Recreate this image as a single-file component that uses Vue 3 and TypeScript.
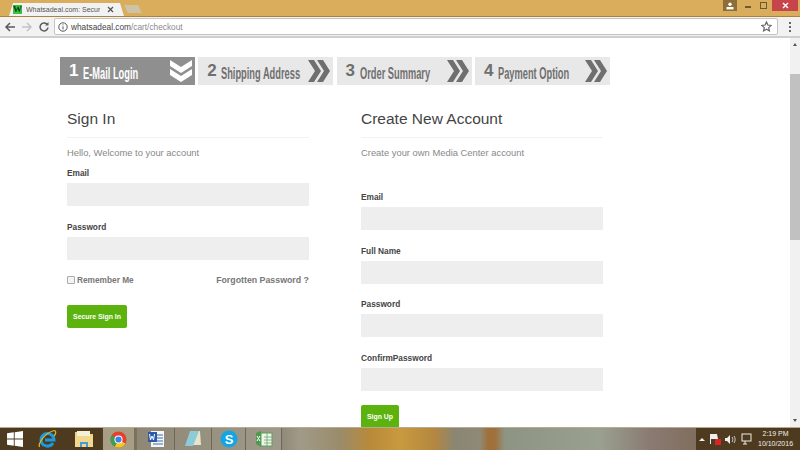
<script setup lang="ts">
const steps = [
  { n: 1, label: 'E-Mail Login', active: true },
  { n: 2, label: 'Shipping Address', active: false },
  { n: 3, label: 'Order Summary', active: false },
  { n: 4, label: 'Payment Option', active: false },
]
</script>

<template>
  <div class="screen">
    <header class="titlebar">
      <div class="tab">
        <span class="favicon">W</span>
        <span class="tabtitle">Whatsadeal.com: Secure</span>
        <svg class="tabclose" width="7" height="7" viewBox="0 0 7 7"><path d="M1 1l5 5M6 1l-5 5" stroke="#555" stroke-width="1.300" /></svg>
      </div>
      <div class="newtab"></div>
      <div class="winctl">
        <span class="user">
          <svg width="8" height="8" viewBox="0 0 8 8"><circle cx="4" cy="2.200" r="1.700" fill="#fff" /><rect x="0.500" y="5" width="7" height="2.400" fill="#fff" /></svg>
        </span>
        <span class="min"></span>
        <span class="restore"></span>
        <span class="close">
          <svg width="7" height="7" viewBox="0 0 7 7"><path d="M1 1l5 5M6 1l-5 5" stroke="#fff" stroke-width="1.400" /></svg>
        </span>
      </div>
    </header>

    <div class="toolbar">
      <svg class="nav" width="12" height="12" viewBox="0 0 12 12"><path d="M11 6H2M6 2L2 6l4 4" fill="none" stroke="#5a5a5a" stroke-width="1.500" /></svg>
      <svg class="nav" width="12" height="12" viewBox="0 0 12 12"><path d="M1 6h9M6 2l4 4-4 4" fill="none" stroke="#c4c4c4" stroke-width="1.500" /></svg>
      <svg class="nav" width="12" height="12" viewBox="0 0 12 12"><path d="M10 6.500A4 4 0 1 1 8.800 3" fill="none" stroke="#5a5a5a" stroke-width="1.500" /><path d="M10.500 1v3.600H7z" fill="#5a5a5a" /></svg>
      <div class="omnibox">
        <svg width="10" height="10" viewBox="0 0 10 10"><circle cx="5" cy="5" r="4.200" fill="none" stroke="#555" /><path d="M5 4.400v3M5 2.400v1" stroke="#555" /></svg>
        <span class="url"><span class="host">whatsadeal.com</span>/cart/checkout</span>
        <svg class="star" width="11" height="11" viewBox="0 0 12 12"><path d="M6 1l1.500 3.400 3.700.4-2.800 2.400.8 3.600L6 9l-3.200 1.800.8-3.600L.8 4.800l3.700-.4z" fill="none" stroke="#666" stroke-width="1.300" /></svg>
      </div>
      <span class="menu"><i></i><i></i><i></i></span>
    </div>

    <div class="viewport">
      <main class="page">
        <nav class="steps">
          <div v-for="s in steps" :key="s.n" class="step" :class="{ active: s.active }">
            <span class="num">{{ s.n }}</span>
            <span class="lab">{{ s.label }}</span>
            <svg v-if="s.active" class="chev" width="24" height="24" viewBox="0 0 24 24">
              <path d="M1 1l11 7 11-7v6l-11 7-11-7zM1 10l11 7 11-7v6l-11 7-11-7z" fill="#fff" />
            </svg>
            <svg v-else class="chev" width="24" height="22" viewBox="0 0 24 22">
              <path d="M1 0h6l7 11-7 11H1l7-11zM10 0h6l7 11-7 11h-6l7-11z" fill="#6f6f6f" />
            </svg>
          </div>
        </nav>

        <div class="cols">
          <section class="col">
            <h2>Sign In</h2>
            <p class="lead">Hello, Welcome to your account</p>
            <label class="fl first">Email</label>
            <div class="input"></div>
            <label class="fl">Password</label>
            <div class="input"></div>
            <div class="row">
              <span class="remember"><i class="check"></i>Remember Me</span>
              <span class="forgot">Forgotten Password ?</span>
            </div>
            <button class="btn signin">Secure Sign In</button>
          </section>

          <section class="col">
            <h2>Create New Account</h2>
            <p class="lead">Create your own Media Center account</p>
            <label class="fl first wide">Email</label>
            <div class="input"></div>
            <label class="fl">Full Name</label>
            <div class="input"></div>
            <label class="fl">Password</label>
            <div class="input"></div>
            <label class="fl">ConfirmPassword</label>
            <div class="input"></div>
            <button class="btn signup">Sign Up</button>
          </section>
        </div>
      </main>
      <aside class="scroll">
        <span class="up"></span>
        <span class="thumb"></span>
        <span class="down"></span>
      </aside>
    </div>

    <footer class="taskbar">
      <span class="tb w29">
        <svg width="16" height="16" viewBox="0 0 16 16"><path d="M0 2.300l6.800-1v6.300H0zM7.700 1.200L16 0v7.600H7.700zM0 8.500h6.800v6.300L0 13.800zM7.700 8.500H16V16l-8.300-1.200z" fill="#fff" /></svg>
      </span>
      <span class="tb w36">
        <svg width="20" height="20" viewBox="0 0 20 20"><path d="M4 11a6.500 6.500 0 0 1 13 0H8" fill="none" stroke="#1a9be0" stroke-width="3" /><path d="M16 14a6.500 6.500 0 0 1-12-3" fill="none" stroke="#1a9be0" stroke-width="3" /><path d="M2.500 18C1 15 7 4 17.500 1.500 19.500 2 19 5 17 7" fill="none" stroke="#e8b923" stroke-width="1.200" /></svg>
      </span>
      <span class="tb w38">
        <svg width="20" height="18" viewBox="0 0 20 18"><path d="M1 2h7l1 2h10v13H1z" fill="#ecd484" /><rect x="3" y="1" width="13" height="5" fill="#f4efd8" /><rect x="1" y="6" width="18" height="11" fill="#f0d98e" /><path d="M6 12h8v5h-2v-3H8v3H6z" fill="#4a9bd4" /></svg>
      </span>
      <span class="tb w31 on">
        <svg width="17" height="17" viewBox="0 0 18 18"><circle cx="9" cy="9" r="8.500" fill="#e3402f" /><path d="M9 9L16.400 13.200A8.500 8.500 0 0 1 5 16.500z" fill="#f7c71e" /><path d="M9 9L5 16.500A8.500 8.500 0 0 1 1.600 4.800z" fill="#36a14d" /><circle cx="9" cy="9" r="4.300" fill="#fff" /><circle cx="9" cy="9" r="3.300" fill="#3f80e8" /></svg>
      </span>
      <span class="sep"></span>
      <span class="tb w38 on2">
        <svg width="18" height="18" viewBox="0 0 18 18"><rect x="4" y="1" width="13" height="16" fill="#f4f6fa" /><path d="M9 5h7M9 8h7M9 11h7M6 14h10" stroke="#3b6fb5" /><rect x="1" y="2" width="9" height="10" fill="#2c5aa8" /><path d="M2.500 4l1 6 1.500-4 1.500 4 1-6" fill="none" stroke="#fff" /></svg>
      </span>
      <span class="tb w37 on2">
        <svg width="18" height="18" viewBox="0 0 18 18"><path d="M7 1h9l1 14H7z" fill="#e9e3cc" /><path d="M6 1h9L9 16H1z" fill="#8ccbd8" /></svg>
      </span>
      <span class="tb w34 on2">
        <svg width="18" height="18" viewBox="0 0 18 18"><circle cx="9" cy="9" r="8.500" fill="#12a5e6" /><text x="9" y="13.500" text-anchor="middle" font-size="13" font-weight="700" font-family="Liberation Sans" fill="#fff">S</text></svg>
      </span>
      <span class="tb w36 on2">
        <svg width="18" height="18" viewBox="0 0 18 18"><rect x="6" y="3" width="11" height="13" fill="#eef5ea" stroke="#5f9e5f" /><path d="M9 7h8M9 10h8M9 13h8M12 3v13" stroke="#6aa86a" stroke-width="0.800" /><path d="M6 1L1 3v11l5 3z" fill="#4f9a4f" /><path d="M2 6l3 5M5 6l-3 5" stroke="#fff" /></svg>
      </span>
      <span class="fill"></span>
      <div class="tray">
        <span class="caret"></span>
        <svg width="12" height="12" viewBox="0 0 12 12"><path d="M2 1h6l1 5H2z" fill="#eee" /><rect x="1" y="1" width="1" height="10" fill="#eee" /><rect x="6" y="6" width="6" height="6" fill="#d8232a" /></svg>
        <svg width="11" height="11" viewBox="0 0 11 11"><path d="M0 4h2l3-3v9L2 7H0z" fill="#eee" /><path d="M7 3c1 1.500 1 3.500 0 5M9 2c1.500 2 1.500 5 0 7" fill="none" stroke="#ccc" /></svg>
        <svg width="12" height="12" viewBox="0 0 12 12"><rect x="2" y="1" width="9" height="7" fill="none" stroke="#eee" /><path d="M5 8v3M3 11h4" stroke="#eee" /></svg>
        <span class="clock"><span>2:19 PM</span><span>10/10/2016</span></span>
      </div>
    </footer>
  </div>
</template>

<style>
html, body { margin: 0; overflow: hidden; }
</style>

<style scoped>
.screen {
  width: 800px;
  height: 450px;
  display: flex;
  flex-direction: column;
  overflow: hidden;
  font-family: "Liberation Sans", Arial, sans-serif;
  background: #fff;
}
.titlebar {
  height: 16px;
  background: #d9ad5c;
  display: flex;
  align-items: flex-end;
  flex: none;
}
.tab {
  width: 115px;
  height: 13px;
  margin-left: 9px;
  background: #f2f2f2;
  display: flex;
  align-items: center;
  padding-left: 4px;
  box-sizing: border-box;
  clip-path: polygon(0 100%, 4px 0, 111px 0, 100% 100%);
}
.favicon {
  width: 9px;
  height: 9px;
  background: #36c33d;
  color: #12361a;
  font: 700 9px/9px "Liberation Serif", serif;
  text-align: center;
  flex: none;
}
.tabtitle {
  font-size: 7px;
  line-height: 11px;
  color: #555;
  width: 74px;
  margin-left: 4px;
  white-space: nowrap;
  overflow: hidden;
  flex: none;
}
.tabclose { margin-left: 7px; flex: none; }
.newtab {
  width: 14px;
  height: 8px;
  background: #cfc3a6;
  margin: 0 0 3px 2px;
  transform: skewX(25deg);
}
.winctl {
  margin-left: auto;
  align-self: flex-start;
  display: flex;
  align-items: flex-start;
}
.user {
  width: 14px;
  height: 11px;
  margin-right: 8px;
  background: #8d6e38;
  display: flex;
  align-items: center;
  justify-content: center;
}
.min { width: 6px; height: 2px; background: #6b5a36; margin: 6px 9px 0 0; }
.restore { width: 5px; height: 5px; border: 1px solid #6b5a36; margin: 2px 5px 0 0; }
.close {
  width: 26px;
  height: 11px;
  margin-right: 2px;
  background: #c8444b;
  display: flex;
  align-items: center;
  justify-content: center;
}
.toolbar {
  height: 22px;
  flex: none;
  box-sizing: border-box;
  background: #f2f2f2;
  border-top: 1px solid #a8833f;
  border-bottom: 2px solid #cfcfcf;
  display: flex;
  align-items: center;
  padding-left: 4px;
}
.nav { margin-right: 5px; flex: none; }
.omnibox {
  width: 724px;
  height: 17px;
  margin-left: -1px;
  box-sizing: border-box;
  background: #fff;
  border: 1px solid #c4c4c4;
  border-radius: 2px;
  display: flex;
  align-items: center;
  padding: 0 5px 0 3px;
  gap: 3px;
  font-size: 8.300px;
  color: #8a8a8a;
  flex: none;
}
.host { color: #444; }
.star { margin-left: auto; }
.menu {
  display: flex;
  flex-direction: column;
  gap: 2px;
  margin-left: 11px;
}
.menu i { width: 2px; height: 2px; background: #666; display: block; }
.viewport { flex: 1; display: flex; min-height: 0; }
.page {
  flex: 1;
  padding: 19px 0 0 60px;
  overflow: hidden;
  box-sizing: border-box;
}
.steps { display: flex; gap: 3.300px; width: 550px; }
.step {
  width: 135px;
  height: 28px;
  background: #e8e8e8;
  color: #6f6f6f;
  display: flex;
  align-items: center;
  padding: 0 2px 0 9px;
  box-sizing: border-box;
  flex: none;
}
.step.active { background: #8f8f8f; color: #fff; }
.num { font-size: 17px; font-weight: 700; width: 14px; flex: none; margin-bottom: 1px; }
.lab {
  font-weight: 700;
  font-size: 16px;
  white-space: nowrap;
  width: 140px;
  margin-right: -60px;
  margin-top: 5px;
  flex: none;
  transform: scaleX(0.58);
  transform-origin: left center;
}
.chev { margin-left: auto; flex: none; }
.cols {
  display: flex;
  gap: 52px;
  padding: 22px 0 0 7px;
}
.col { width: 242px; flex: none; }
h2 {
  font-size: 15.500px;
  line-height: 22px;
  font-weight: 400;
  color: #444;
  margin: 1px 0 0;
  padding-bottom: 7px;
  border-bottom: 1px solid #f2f2f2;
}
.lead {
  font-size: 9.400px;
  line-height: 14px;
  color: #888;
  margin: 8px 0 0;
}
.fl {
  display: block;
  font-size: 8.300px;
  font-weight: 700;
  line-height: 12px;
  color: #444;
  margin: 14.500px 0 4px;
}
.fl.first { margin-top: 7px; }
.fl.wide { margin-top: 31px; }
.input { height: 23px; background: #eeeeee; }
.row {
  display: flex;
  justify-content: space-between;
  align-items: center;
  height: 11px;
  margin-top: 15px;
  font-size: 8.800px;
  font-weight: 700;
  color: #777;
}
.remember { display: flex; align-items: center; gap: 2px; font-size: 8.300px; }
.check {
  width: 6px;
  height: 6px;
  border: 1px solid #aaa;
  border-radius: 1px;
  background: #f4f4f4;
}
.btn {
  display: block;
  height: 23px;
  border: 0;
  border-radius: 2px;
  background: #5cb30e;
  color: #fff;
  font: 700 6.900px "Liberation Sans", sans-serif;
  padding: 0;
}
.signin { width: 60px; margin-top: 19px; }
.signup { width: 38px; margin-top: 14px; }
.scroll {
  width: 10px;
  flex: none;
  background: #f1f1f1;
  display: flex;
  flex-direction: column;
  align-items: center;
}
.up {
  margin-top: 5px;
  border: 2px solid transparent;
  border-top: 0;
  border-bottom: 3px solid #555;
}
.thumb {
  width: 10px;
  height: 166px;
  margin-top: 28px;
  background: #c1c1c1;
}
.down {
  margin-top: auto;
  margin-bottom: 5px;
  border: 2px solid transparent;
  border-bottom: 0;
  border-top: 3px solid #555;
}
.taskbar {
  height: 23px;
  flex: none;
  box-sizing: border-box;
  display: flex;
  align-items: center;
  border-top: 1px solid #b5ac94;
  background: linear-gradient(90deg, #4e3a1e 0 100px, #7d7460 137px, #8f8a78 282px, #a09a88 300px, #9a8c6a 340px, #b88a3a 370px, #c99a3f 400px, #b38740 435px, #8a8674 455px, #8f8a78 480px, #a0703a 488px, #a0703a 495px, #8d9484 505px, #9aa08f 600px, #8a7a72 650px, #806e5e 696px);
}
.tb {
  height: 22px;
  display: flex;
  align-items: center;
  justify-content: center;
  flex: none;
  box-sizing: border-box;
}
.w29 { width: 29px; }
.w31 { width: 31px; }
.w34 { width: 34px; }
.w36 { width: 36px; }
.w37 { width: 37px; }
.w38 { width: 38px; }
.tb.on { background: #a89e86; }
.tb.on2 { background: rgba(255, 255, 255, 0.14); border-right: 1px solid #6f6857; }
.sep { width: 3px; flex: none; }
.fill { flex: 1; }
.tray {
  width: 104px;
  height: 22px;
  background: #4e3a1e;
  display: flex;
  align-items: center;
  gap: 4px;
  padding-left: 3px;
  box-sizing: border-box;
  color: #eee;
  flex: none;
}
.caret {
  border: 3px solid transparent;
  border-top: 0;
  border-bottom: 3px solid #eee;
}
.clock {
  display: flex;
  flex-direction: column;
  align-items: center;
  font-size: 7px;
  line-height: 10px;
  margin-left: 2px;
}
</style>
